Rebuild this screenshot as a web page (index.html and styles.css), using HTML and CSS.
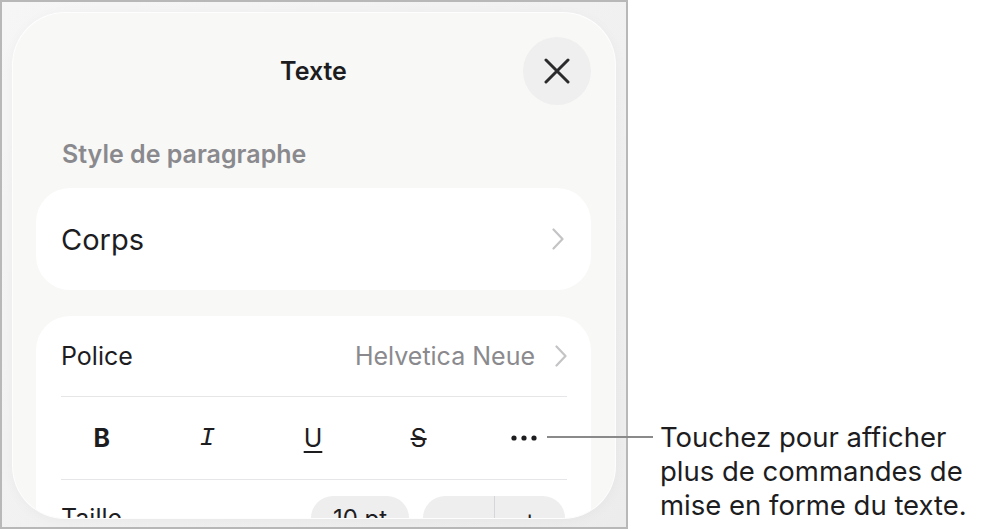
FILE: index.html
```html
<!DOCTYPE html>
<html>
<head>
  <title>Texte - format</title>
  <link rel="stylesheet" href="styles.css">
</head>
<body>
  <div class="figure">
    <div class="device">
      <div class="sheet">
        <header class="sheet-header">
          <h1>Texte</h1>
          <button class="close-btn" aria-label="Fermer">
            <svg width="26" height="26" viewBox="0 0 26 26">
              <path d="M2 2 L24 24 M24 2 L2 24" stroke="#2b2b2d" stroke-width="3" stroke-linecap="round" fill="none"/>
            </svg>
          </button>
        </header>

        <h2 class="section-label">Style de paragraphe</h2>

        <div class="group">
          <div class="row style-row">
            <span class="corps">Corps</span>
            <svg class="chevron" width="12" height="22" viewBox="0 0 12 22">
              <path d="M1.5 1.5 L10.5 11 L1.5 20.5" stroke="#c4c4c6" stroke-width="2.2" stroke-linecap="round" stroke-linejoin="round" fill="none"/>
            </svg>
          </div>
        </div>

        <div class="group">
          <div class="row font-row">
            <span class="label">Police</span>
            <span class="value">Helvetica Neue</span>
            <svg class="chevron" width="12" height="22" viewBox="0 0 12 22">
              <path d="M1.5 1.5 L10.5 11 L1.5 20.5" stroke="#c4c4c6" stroke-width="2.2" stroke-linecap="round" stroke-linejoin="round" fill="none"/>
            </svg>
          </div>

          <div class="format-row">
            <div class="format-bar">
              <span class="fmt fmt-b">B</span>
              <span class="fmt fmt-i">I</span>
              <span class="fmt fmt-u">U</span>
              <span class="fmt fmt-s">S</span>
              <span class="fmt fmt-more">
                <svg width="26" height="6" viewBox="0 0 26 6">
                  <circle cx="3" cy="3" r="2.6" fill="#1d1d1f"/>
                  <circle cx="13" cy="3" r="2.6" fill="#1d1d1f"/>
                  <circle cx="23" cy="3" r="2.6" fill="#1d1d1f"/>
                </svg>
              </span>
            </div>
          </div>

          <div class="row size-row">
            <span class="label">Taille</span>
            <div class="size-controls">
              <span class="pill size-value">10 pt</span>
              <div class="pill stepper">
                <span>&minus;</span>
                <span>+</span>
              </div>
            </div>
          </div>
        </div>
      </div>
    </div>

    <p class="callout">Touchez pour afficher<br>plus de commandes de<br>mise en forme du texte.</p>
    <span class="callout-line"></span>
  </div>
</body>
</html>
```

FILE: styles.css
```css
body {
  margin: 0;
  background-color: #ffffff;
  font-family: Inter, "Liberation Sans", sans-serif;
  color: #1d1d1f;
}

.figure {
  position: relative;
  display: flex;
  align-items: flex-start;
}

.device {
  box-sizing: border-box;
  width: 628px;
  height: 529px;
  padding: 11px;
  border: 2px solid #b8b8b8;
  background: linear-gradient(135deg, #f6f6f6, #ececec);
}

.sheet {
  box-sizing: border-box;
  height: 505px;
  padding: 24px 24px 0 23px;
  border-radius: 52px;
  background-color: #f8f8f7;
  box-shadow: 0 0 0 1px rgba(255, 255, 255, 0.9), 0 2px 14px rgba(0, 0, 0, 0.04);
  overflow: hidden;
}

.sheet-header {
  display: grid;
  grid-template-columns: 68px 1fr 68px;
  align-items: center;
  height: 68px;
}

.sheet-header h1 {
  grid-column: 2;
  margin: 0;
  text-align: center;
  font-size: 25px;
  font-weight: 600;
}

.close-btn {
  grid-column: 3;
  display: flex;
  align-items: center;
  justify-content: center;
  width: 68px;
  height: 68px;
  padding: 0;
  border: none;
  border-radius: 50%;
  background-color: #efefef;
}

.section-label {
  margin: 34px 0 19px 26px;
  font-size: 25px;
  line-height: 30px;
  font-weight: 600;
  color: #8a8a8e;
}

.group {
  background-color: #ffffff;
  border-radius: 34px;
  padding: 0 24px 0 25px;
  margin-bottom: 26px;
}

.row {
  display: flex;
  align-items: center;
}

.style-row {
  height: 102px;
  padding-right: 3px;
}

.corps {
  flex: 1;
  font-size: 29px;
}

.font-row {
  height: 80px;
  border-bottom: 1px solid #e6e6e8;
  font-size: 25px;
}

.font-row .label {
  flex: 1;
}

.font-row .value {
  color: #8a8a8e;
  margin-right: 20px;
}

.format-row {
  height: 82px;
  border-bottom: 1px solid #e6e6e8;
}

.format-bar {
  display: grid;
  grid-template-columns: repeat(5, 1fr);
  align-items: center;
  height: 100%;
  margin: 0 -10px 0 -12px;
}

.fmt {
  display: flex;
  justify-content: center;
  font-size: 25px;
  color: #1d1d1f;
}

.fmt-b {
  font-weight: 700;
  font-size: 25px;
}

.fmt-i {
  font-family: "Liberation Mono", monospace;
  font-style: italic;
  font-size: 26px;
}

.fmt-u {
  text-decoration: underline;
  text-decoration-thickness: 2px;
  text-underline-offset: 4px;
}

.fmt-s {
  text-decoration: line-through;
  text-decoration-thickness: 2px;
}

.size-row {
  height: 76px;
  font-size: 25px;
}

.size-row .label {
  flex: 1;
}

.size-controls {
  display: flex;
  gap: 14px;
  margin-right: 2px;
}

.pill {
  height: 44px;
  border-radius: 22px;
  background-color: #eeeeef;
  font-size: 24px;
}

.size-value {
  display: flex;
  align-items: center;
  justify-content: center;
  width: 98px;
}

.stepper {
  display: flex;
  width: 142px;
}

.stepper span {
  flex: 1;
  display: flex;
  align-items: center;
  justify-content: center;
}

.stepper span + span {
  border-left: 1px solid #d6d6d8;
}

.callout {
  margin: 420px 0 0 32px;
  font-size: 27.5px;
  line-height: 34px;
  color: #1d1d1f;
}

.callout-line {
  position: absolute;
  left: 547px;
  top: 436px;
  width: 106px;
  height: 2px;
  background-color: #8a8a8a;
}
```
